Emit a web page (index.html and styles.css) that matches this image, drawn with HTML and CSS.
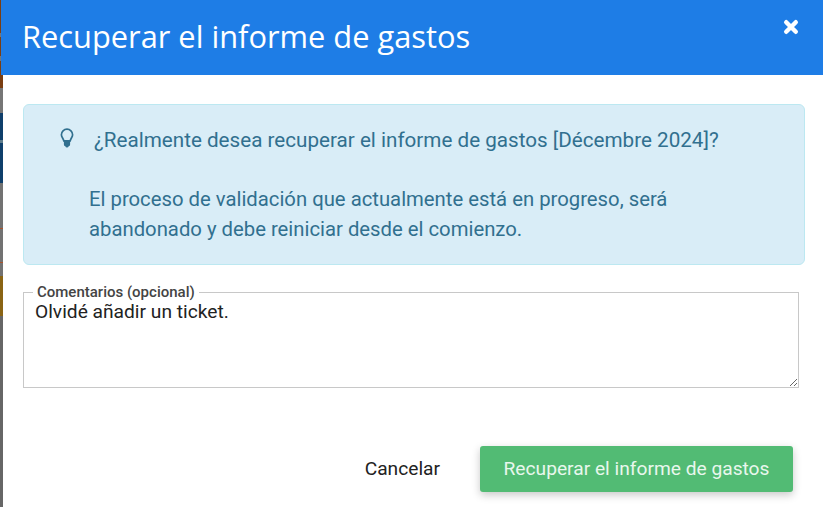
FILE: index.html
```html
<!DOCTYPE html>
<html lang="es">
<head>
<meta charset="utf-8">
<title>Recuperar el informe de gastos</title>
<link rel="stylesheet" href="styles.css">
</head>
<body>
<div class="backdrop" aria-hidden="true">
  <i class="s s1"></i><i class="s s2"></i><i class="s s1b"></i><i class="s s2b"></i><i class="s s1c"></i><i class="s s2c"></i><i class="s s3"></i><i class="s s3g"></i><i class="s s3b"></i><i class="s s4"></i><i class="s s5"></i><i class="s s4b"></i><i class="s s5"></i><i class="s s6"></i><i class="s s7"></i><i class="s s8"></i>
</div>
<div class="dialog">
  <header class="head">
    <h1 class="title">Recuperar el informe de gastos</h1>
    <svg class="close" viewBox="0 0 16 16" aria-label="Cerrar"><path d="M3.200 3.200 12.800 12.800M12.800 3.200 3.200 12.800" stroke="#fff" stroke-width="4.400" stroke-linecap="round"/></svg>
  </header>
  <main class="body">
    <section class="alert">
      <div class="question">
        <svg class="bulb" viewBox="0 0 14 20"><path d="M7 1.200a5.600 5.600 0 0 0-5.600 5.600c0 2.400 2 3.600 2.400 6h6.400c.4-2.400 2.400-3.600 2.400-6A5.600 5.600 0 0 0 7 1.200Z" fill="none" stroke="#31708f" stroke-width="1.700"/><path d="M3.900 13h6.200v3.400a2 2 0 0 1-1.400 1.900 1.800 1.800 0 0 1-3.400 0 2 2 0 0 1-1.400-1.900Z" fill="#31708f"/></svg>
        <p class="qtext">¿Realmente desea recuperar el informe de gastos [Décembre 2024]?</p>
      </div>
      <p class="detail">El proceso de validación que actualmente está en progreso, será abandonado y debe reiniciar desde el comienzo.</p>
    </section>
    <fieldset class="field">
      <legend class="legend">Comentarios (opcional)</legend>
      <textarea class="input">Olvidé añadir un ticket.</textarea>
    </fieldset>
    <footer class="actions">
      <button class="btn cancel">Cancelar</button>
      <button class="btn ok">Recuperar el informe de gastos</button>
    </footer>
  </main>
</div>
</body>
</html>
```
FILE: styles.css
```css
* { box-sizing: border-box; }
html, body { margin: 0; height: 100%; overflow: hidden; }
body { display: flex; font-family: Roboto, "Liberation Sans", sans-serif; background: #fff; }
.backdrop { width: 3px; flex: none; display: flex; flex-direction: column; height: 507px; background: #666; }
.s { display: block; flex: none; }
.s1 { height: 33px; background: #7a3e12; }
.s2 { height: 4px; background: #777; }
.s1b { height: 19px; background: #7a3e12; }
.s2b { height: 5px; background: #777; }
.s1c { height: 27px; background: #7a3e12; }
.s2c { height: 25px; background: #767676; }
.s3 { height: 27px; background: #0f3f6b; }
.s3g { height: 3px; background: #5f7d8c; }
.s3b { height: 40px; background: #0f3f6b; }
.s4 { height: 45px; background: #727272; }
.s5 { height: 1px; background: #a8542c; }
.s4b { height: 33px; background: #727272; }
.s6 { height: 13px; background: #727272; }
.s7 { height: 40px; background: #8a6414; }
.s8 { height: 191px; background: #666; }
.dialog { flex: 1; min-width: 0; display: flex; flex-direction: column; background: #fff; }
.head { height: 75px; flex: none; margin-left: -2px; background: #1e7de6; display: flex; justify-content: space-between; align-items: flex-start; padding: 0 24px 0 21px; }
.title { margin: 17px 0 0; font-size: 30.800px; line-height: 38px; font-weight: 400; color: #fff; font-family: "Open Sans", sans-serif; }
.close { width: 16px; height: 16px; margin-top: 19px; }
.body { flex: 1; padding: 29px 24px 0 20px; display: flex; flex-direction: column; }
.alert { height: 161px; margin-right: -6px; background: #d9edf7; border: 1px solid #bce8f1; border-radius: 6px; color: #31708f; font-size: 20.300px; line-height: 30px; padding: 20px 60px 0 65px; }
.question { position: relative; white-space: nowrap; }
.bulb { position: absolute; left: -29px; top: 3px; width: 14px; height: 20px; }
.qtext { margin: 0 0 0 5px; font-size: 20.650px; }
.detail { margin: 29px 0 0; }
.field { margin: 0; margin-top: 19px; padding: 0; height: 104px; border: 1px solid #c8c8c8; display: block; min-width: 0; }
.legend { margin-left: 9px; padding: 0 4px; font-size: 15px; line-height: 16px; font-weight: 500; color: #444; }
.input { display: block; width: 100%; height: 87px; border: 0; outline: 0; padding: 0 11px; background: transparent; font: 19.200px/24px Roboto, sans-serif; color: #222; resize: vertical; }
.actions { margin-top: 58px; display: flex; justify-content: flex-end; align-items: center; padding-right: 6px; gap: 40px; }
.btn { border: 0; background: none; font: 19.200px/24px Roboto, sans-serif; cursor: pointer; padding: 0; }
.cancel { color: #222; }
.ok { width: 313px; height: 46px; background: #52bb74; color: #e8f7ed; border-radius: 3px; box-shadow: 0 3px 8px rgba(0,0,0,.22); }
```
